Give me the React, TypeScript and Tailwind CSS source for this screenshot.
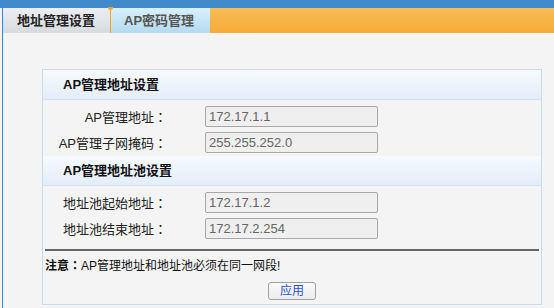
const font = { fontFamily: '"Liberation Sans", "Noto Sans CJK SC", sans-serif' };

function Colon() {
  return <span style={{ fontFamily: '"Noto Sans CJK TC", sans-serif' }}>：</span>;
}

function Field({ label, value }: { label: string; value: string }) {
  return (
    <div className="flex items-center h-[21px]">
      <div className="w-[124px] text-right text-[13px] leading-[21px] text-[#222]">
        {label}
        <Colon />
      </div>
      <div className="ml-[38px] w-[173px] h-[21px] border border-[#a8a8a8] rounded-[2px] bg-[#efefef] pl-[3px] text-[13px] leading-[19px] text-[#666]">
        {value}
      </div>
    </div>
  );
}

function SectionHeader({ title }: { title: string }) {
  return (
    <div className="h-[30px] flex items-center pl-[20px] bg-gradient-to-b from-[#f7faff] to-[#e3edf9] border-b border-[#d3e2f3] text-[13px] font-bold text-[#111]">
      {title}
    </div>
  );
}

export default function App() {
  return (
    <div className="w-[554px] h-[308px] bg-[#f4f4f4] overflow-hidden" style={font}>
      <div className="h-[8px] bg-[#418bca]" />
      <div className="pl-[2px] h-[300px]">
        <div className="border-l border-[#2c86ea] h-full flex flex-col">
          {/* tabs */}
          <div className="h-[25px] flex">
            <div className="w-[107px] bg-gradient-to-b from-[#eceef0] to-[#d8dbde] flex items-center pl-[14px] text-[13px] font-bold text-[#222]">
              地址管理设置
            </div>
            <div className="relative w-px bg-[#f5a623]">
              <div className="absolute -top-px -left-[2px] w-[5px] h-[3px] bg-[#f5a623] rounded-b" />
            </div>
            <div className="w-[99px] bg-gradient-to-b from-[#d9f0fa] to-[#b4dbef] flex items-center pl-[13px] text-[13px] font-bold text-[#555]">
              AP密码管理
            </div>
            <div className="flex-1 bg-gradient-to-b from-[#f8bb55] to-[#f5ac38]" />
          </div>

          {/* panel */}
          <div className="ml-[39px] mt-[36px] w-[500px] h-[236px] border border-[#c6dcf0] flex flex-col">
            <SectionHeader title="AP管理地址设置" />
            <div className="pt-[6px] flex flex-col gap-[5px]">
              <Field label="AP管理地址" value="172.17.1.1" />
              <Field label="AP管理子网掩码" value="255.255.252.0" />
            </div>
            <div className="mt-[3px]">
              <SectionHeader title="AP管理地址池设置" />
            </div>
            <div className="pt-[6px] flex flex-col gap-[5px]">
              <Field label="地址池起始地址" value="172.17.1.2" />
              <Field label="地址池结束地址" value="172.17.2.254" />
            </div>
            <div className="mx-[2px] mt-[10px] h-[2px] bg-[#666]" />
            <div className="pl-[2px] mt-[7px] text-[12px] leading-[14px] text-[#111]">
              <span className="font-bold">
                注意
                <Colon />
              </span>
              AP管理地址和地址池必须在同一网段!
            </div>
            <div className="mt-[9px] flex justify-center">
              <button className="w-[48px] h-[18px] border border-[#a0a0a0] rounded-[3px] bg-gradient-to-b from-[#fafafa] to-[#ececec] text-[12px] leading-[16px] text-[#2d4fd8]">
                应用
              </button>
            </div>
          </div>
        </div>
      </div>
    </div>
  );
}
